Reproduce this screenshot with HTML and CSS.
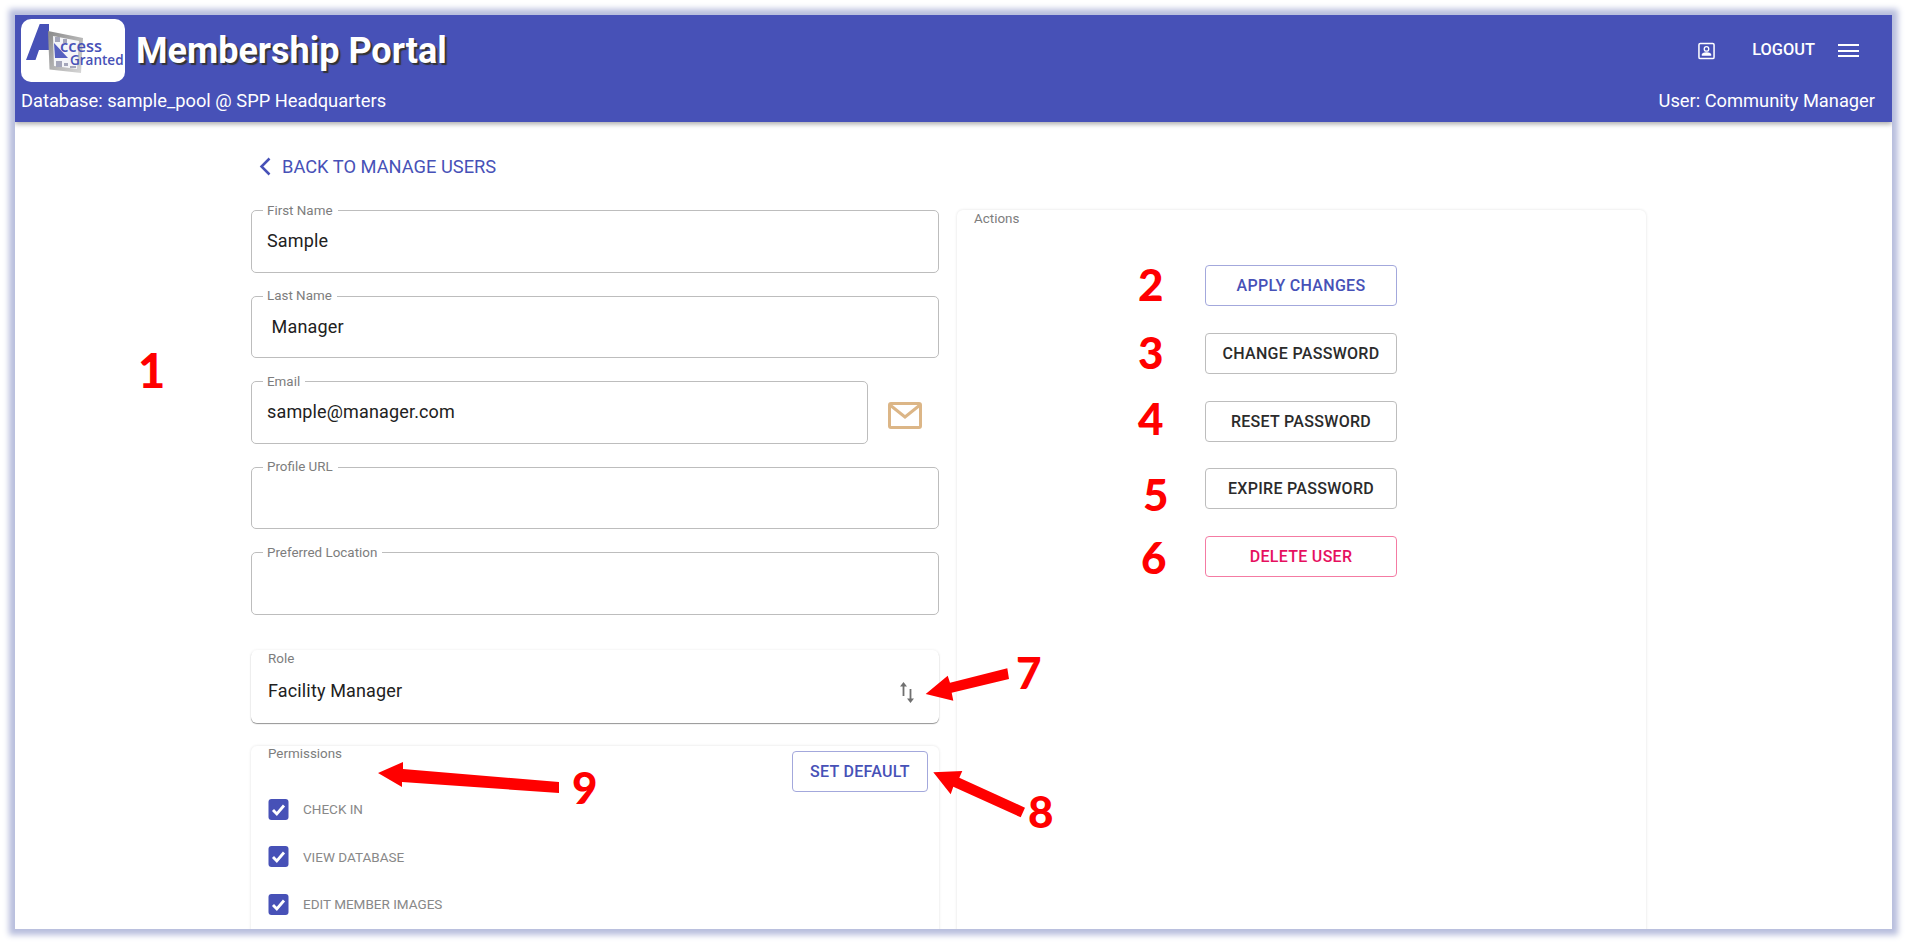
FILE: index.html
```html
<!DOCTYPE html>
<html lang="en">
<head>
<meta charset="utf-8">
<title>Membership Portal</title>
<link rel="stylesheet" href="styles.css">
</head>
<body>
<div class="window">
  <header class="topbar">
    <div class="topbar-row">
      <svg class="logo" viewBox="0 0 104 63">
        <defs>
          <linearGradient id="frame" x1="0" y1="0" x2="1" y2="1">
            <stop offset="0" stop-color="#8a8a8a"/>
            <stop offset="1" stop-color="#d8d8d8"/>
          </linearGradient>
        </defs>
        <rect width="104" height="63" rx="10" fill="#fff"/>
        <polygon points="5,41 18.7,5 28,5 28,31 18,31 14.5,41" fill="#4751b7"/>
        <polygon points="27,12 62,19 60,54 28.5,50.5" fill="url(#frame)"/>
        <polygon points="32,17 58,22 56,50 33,47" fill="#f4f5f8"/>
        <g fill="#a4a6ba">
          <rect x="34" y="18" width="5" height="5"/>
          <rect x="42" y="20" width="4" height="4"/>
          <rect x="35" y="42" width="6" height="6"/>
          <rect x="43" y="44" width="4" height="3"/>
          <rect x="49" y="47" width="6" height="2"/>
        </g>
        <polygon points="33,24 47,39 34,39" fill="#5560bf"/>
        <text class="logo-ccess" x="39" y="33">ccess</text>
        <text class="logo-granted" x="49" y="45.5">Granted</text>
      </svg>
      <h1 class="title">Membership Portal</h1>
      <div class="spacer"></div>
      <svg class="contact-icon" viewBox="0 0 18 18">
        <rect x="1" y="1" width="16" height="16" rx="1.5" fill="none" stroke="#fff" stroke-width="1.6"/>
        <circle cx="9" cy="6.8" r="2.4" fill="none" stroke="#fff" stroke-width="1.4"/>
        <path d="M4 14v-1.2c0-1.6 3.2-2.4 5-2.4s5 .8 5 2.4V14z" fill="#fff"/>
      </svg>
      <span class="logout">LOGOUT</span>
      <div class="burger"><i></i><i></i><i></i></div>
    </div>
    <div class="topbar-info">
      <span>Database: sample_pool @ SPP Headquarters</span>
      <span>User: Community Manager</span>
    </div>
  </header>

  <main class="content">
    <a class="back">
      <svg class="chevron" viewBox="0 0 12 19"><path d="M10.5 1.5 2.5 9.5l8 8" fill="none" stroke="#4751b7" stroke-width="2.5"/></svg>
      BACK TO MANAGE USERS
    </a>
    <div class="columns">
      <section class="col-left">
        <fieldset class="field"><legend>First Name</legend><div class="value">Sample</div></fieldset>
        <fieldset class="field"><legend>Last Name</legend><div class="value">&nbsp;Manager</div></fieldset>
        <div class="email-row">
          <fieldset class="field"><legend>Email</legend><div class="value">sample@manager.com</div></fieldset>
          <svg class="mail-icon" viewBox="0 0 34 27">
            <rect x="1.5" y="1.5" width="31" height="24" rx="1.5" fill="none" stroke="#dcb687" stroke-width="3"/>
            <path d="M2 3l15 12L32 3" fill="none" stroke="#dcb687" stroke-width="3"/>
          </svg>
        </div>
        <fieldset class="field"><legend>Profile URL</legend><div class="value">&nbsp;</div></fieldset>
        <fieldset class="field"><legend>Preferred Location</legend><div class="value">&nbsp;</div></fieldset>

        <div class="role-card">
          <div class="card-label">Role</div>
          <div class="role-row">
            <span>Facility Manager</span>
            <svg class="sort-icon" viewBox="0 0 16 21">
              <path d="M4.5 0 8 4.4H5.4V14H3.6V4.4H1zM11.5 21 8 16.6h2.6V7h1.8v9.6H15z" fill="#707070"/>
            </svg>
          </div>
        </div>

        <div class="perm-card">
          <div class="perm-head">
            <div class="card-label">Permissions</div>
            <button class="btn btn-primary btn-small">SET DEFAULT</button>
          </div>
          <label class="check"><svg class="box" viewBox="0 0 20 21"><rect width="20" height="21" rx="3" fill="#4751b7"/><path d="M4.5 11l3.8 4 7.2-8.5" fill="none" stroke="#fff" stroke-width="2.8"/></svg>CHECK IN</label>
          <label class="check"><svg class="box" viewBox="0 0 20 21"><rect width="20" height="21" rx="3" fill="#4751b7"/><path d="M4.5 11l3.8 4 7.2-8.5" fill="none" stroke="#fff" stroke-width="2.8"/></svg>VIEW DATABASE</label>
          <label class="check"><svg class="box" viewBox="0 0 20 21"><rect width="20" height="21" rx="3" fill="#4751b7"/><path d="M4.5 11l3.8 4 7.2-8.5" fill="none" stroke="#fff" stroke-width="2.8"/></svg>EDIT MEMBER IMAGES</label>
        </div>
      </section>

      <section class="col-right">
        <div class="card-label">Actions</div>
        <div class="actions">
          <button class="btn btn-primary">APPLY CHANGES</button>
          <button class="btn">CHANGE PASSWORD</button>
          <button class="btn">RESET PASSWORD</button>
          <button class="btn">EXPIRE PASSWORD</button>
          <button class="btn btn-danger">DELETE USER</button>
        </div>
      </section>
    </div>
  </main>
</div>

<svg class="arrows" viewBox="0 0 1907 944">
  <polygon points="925.7,694 947.7,675.7 950,682.7 1007.3,668.3 1009,679 951.7,692.7 953.3,700.7" fill="#f00"/>
  <polygon points="933.3,772.3 962.3,771 959.3,777.7 1025,807.7 1020.7,817.3 953.3,786.7 950.7,794.3" fill="#f00"/>
  <polygon points="378,773 403,762 403,769 559,782 559,793 402,782 402,787" fill="#f00"/>
</svg>
<span class="mark mark-1">1</span>
<span class="mark mark-2">2</span>
<span class="mark mark-3">3</span>
<span class="mark mark-4">4</span>
<span class="mark mark-5">5</span>
<span class="mark mark-6">6</span>
<span class="mark mark-7">7</span>
<span class="mark mark-8">8</span>
<span class="mark mark-9">9</span>
</body>
</html>
```
FILE: styles.css
```css
* { box-sizing: border-box; }
html, body { margin: 0; height: 100%; overflow: hidden; background: #fff; }
body { padding: 15px; font-family: Roboto, "Liberation Sans", sans-serif; color: #212121; }

.window {
  height: 914px;
  background: #fff;
  overflow: hidden;
  box-shadow: 0 0 6px 6px #b8bedd;
}

.topbar {
  height: 107px;
  background: #4751b7;
  color: #fff;
  padding: 4px 17px 0 6px;
  box-shadow: 0 2px 5px rgba(0, 0, 0, .35);
  position: relative;
}
.topbar-row { display: flex; align-items: center; height: 63px; }
.logo { width: 104px; height: 63px; flex: none; }
.logo-ccess { font-family: "Open Sans", sans-serif; font-size: 16.5px; font-weight: 600; fill: #4751b7; }
.logo-granted { font-family: "Open Sans", sans-serif; font-size: 13.5px; font-weight: 600; fill: #4751b7; }
.title {
  margin: 0 0 0 11px;
  font-size: 36px;
  font-weight: 700;
  text-shadow: 2px 2px 1px #333;
}
.spacer { flex: 1; }
.contact-icon { width: 17px; height: 18px; margin-right: 37px; margin-left: -1px; }
.logout { font-size: 16.4px; font-weight: 500; margin-right: 23px; margin-bottom: 2px; }
.burger { width: 21px; display: flex; flex-direction: column; gap: 3.5px; margin-right: 16px; }
.burger i { display: block; height: 2px; background: #fff; }
.topbar-info {
  display: flex;
  justify-content: space-between;
  font-size: 18.3px;
  margin-top: 8px;
}

.content { padding: 32px 0 0 236px; }
.back {
  display: flex;
  align-items: center;
  gap: 11px;
  height: 24px;
  padding-left: 8px;
  color: #4751b7;
  font-size: 18.3px;
}
.chevron { width: 12px; height: 19px; }

.columns { display: flex; gap: 18px; margin-top: 32px; align-items: flex-start; }
.col-left { width: 688px; display: flex; flex-direction: column; gap: 23px; }
.col-right {
  width: 689px;
  height: 760px;
  border-radius: 6px;
  box-shadow: 0 0 3px rgba(0, 0, 0, .12);
  padding: 1px 17px;
}

.field {
  margin: 0;
  padding: 0 15px;
  height: 62.5px;
  min-width: 0;
  border: 1px solid #bdbdbd;
  border-radius: 5px;
}
.field legend {
  margin-left: -4px;
  padding: 0 5px 0 4px;
  line-height: 0;
  height: 0;
  font-size: 13.4px;
  color: #7d7d7d;
}
.value { font-size: 18px; line-height: 24px; padding-top: 18px; letter-spacing: .15px; }

.email-row { display: flex; align-items: center; }
.email-row .field { width: 617px; flex: none; }
.mail-icon { width: 34px; height: 27px; margin: 6px 0 0 20px; }

.card-label { font-size: 13.4px; color: #7d7d7d; line-height: 16px; }

.role-card {
  height: 73px;
  margin-top: 12px;
  padding: 1px 17px 0;
  border-radius: 6px;
  box-shadow: 0 1px 1px rgba(0, 0, 0, .4), 0 0 3px rgba(0, 0, 0, .08);
}
.role-row {
  display: flex;
  justify-content: space-between;
  align-items: center;
  margin-top: 12px;
  font-size: 18px;
  letter-spacing: .15px;
  padding-right: 7px;
}
.sort-icon { width: 16px; height: 21px; margin-top: 3px; }

.perm-card {
  height: 300px;
  padding: 0 11px 0 17px;
  border-radius: 6px;
  box-shadow: 0 0 3px rgba(0, 0, 0, .12);
}
.perm-head { display: flex; justify-content: space-between; align-items: flex-start; height: 53px; }
.check {
  display: flex;
  align-items: center;
  gap: 14px;
  height: 21px;
  margin-bottom: 26.5px;
  font-size: 13.5px;
  color: #888;
}
.box { width: 21px; height: 21px; flex: none; }

.btn {
  display: block;
  width: 192px;
  height: 41px;
  padding: 0;
  background: #fff;
  border: 1px solid #bdbdbd;
  border-radius: 4px;
  font-family: Roboto, "Liberation Sans", sans-serif;
  font-size: 16px;
  font-weight: 500;
  color: #2b2b2b;
  letter-spacing: .3px;
}
.btn-primary { color: #4751b7; border-color: #a3a8dc; }
.btn-danger { color: #e6105f; border-color: #f47ba3; }
.btn-small { width: 136px; margin-top: 5px; }

.actions {
  display: flex;
  flex-direction: column;
  gap: 26.8px;
  margin: 38px 0 0 231px;
}

.arrows { position: absolute; left: 0; top: 0; width: 1907px; height: 944px; pointer-events: none; }
.mark {
  position: absolute;
  font-family: Lato, "Open Sans", sans-serif;
  font-weight: 900;
  font-size: 44px;
  line-height: 44px;
  color: #f00;
}
.mark-1 { left: 138px; top: 348px; font-size: 47px; }
.mark-2 { left: 1138px; top: 262px; }
.mark-3 { left: 1138px; top: 330px; }
.mark-4 { left: 1138px; top: 396px; }
.mark-5 { left: 1143px; top: 472px; }
.mark-6 { left: 1141px; top: 535px; }
.mark-7 { left: 1016px; top: 650px; }
.mark-8 { left: 1028px; top: 789px; }
.mark-9 { left: 572px; top: 765px; }
```
